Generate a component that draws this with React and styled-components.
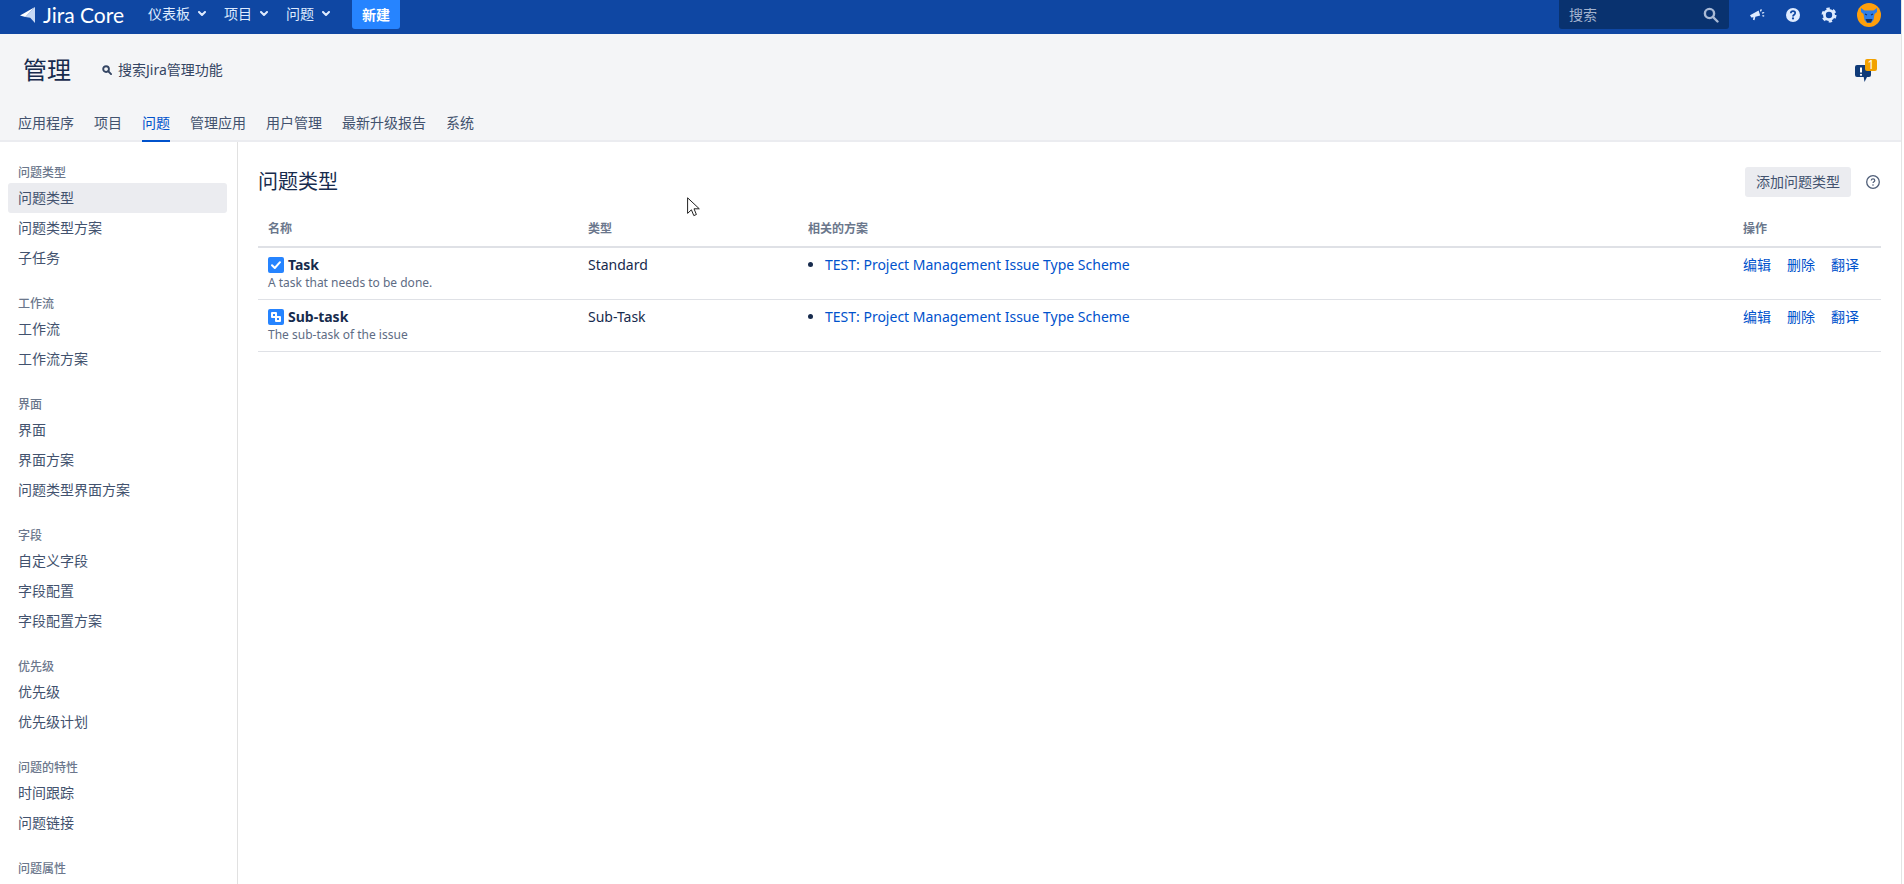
import React from 'react';
import styled, { createGlobalStyle } from 'styled-components';

const FONT = '"Noto Sans", "Noto Sans CJK SC", sans-serif';

const GlobalStyle = createGlobalStyle`
  html, body {
    margin: 0;
    height: 100%;
    overflow: hidden;
    background: #fff;
  }
  body {
    font-family: ${FONT};
    font-size: 14px;
    line-height: 20px;
    color: #172b4d;
  }
`;

const Page = styled.div`
  position: relative;
  width: 1901px;
  height: 884px;
  overflow: hidden;
  border-right: 1px solid #e4e4e4;
`;

const TopBar = styled.header`
  display: flex;
  align-items: flex-start;
  height: 34px;
  padding: 0 20px;
  background: #0f47a3;
  color: #deebff;
`;

const Logo = styled.a`
  display: flex;
  align-items: center;
  gap: 8px;
  height: 30px;
  color: #fff;
  font-family: "Lato", sans-serif;
  font-size: 21px;
  font-weight: 400;
  width: 107px;
  white-space: nowrap;
`;

const Nav = styled.nav`
  display: flex;
  align-items: center;
  gap: 18px;
  height: 28px;
  margin-left: 21px;
`;

const NavItem = styled.a`
  display: flex;
  align-items: center;
  gap: 8px;
  color: #deebff;
`;

const CreateButton = styled.button`
  width: 48px;
  height: 29px;
  margin-left: 22px;
  padding: 0;
  border: 0;
  border-radius: 0 0 3px 3px;
  background: #2684ff;
  color: #fff;
  font: 700 14px/20px ${FONT};
`;

const TopRight = styled.div`
  display: flex;
  align-items: center;
  gap: 20px;
  height: 29px;
  margin-left: auto;
`;

const SearchBox = styled.div`
  display: flex;
  align-items: center;
  justify-content: space-between;
  box-sizing: border-box;
  width: 170px;
  height: 29px;
  padding: 0 10px;
  border-radius: 0 0 3px 3px;
  background: #09326f;
  color: #a3b3cf;
`;

const IconSlot = styled.span`
  display: flex;
  align-items: center;
  justify-content: center;
  width: ${(p) => p.$size || 16}px;
  height: ${(p) => p.$size || 16}px;
`;

const AdminHeader = styled.div`
  background: #f4f5f7;
  border-bottom: 2px solid #ebecf0;
`;

const AdminTop = styled.div`
  display: flex;
  align-items: center;
  height: 72px;
  padding: 0 24px 0 23px;
`;

const AdminTitle = styled.h1`
  margin: 0;
  font-size: 24px;
  font-weight: 400;
  line-height: 32px;
`;

const AdminSearch = styled.a`
  display: flex;
  align-items: center;
  gap: 6px;
  margin-left: 31px;
  color: #344563;
`;

const Bubble = styled.span`
  position: relative;
  width: 22px;
  height: 23px;
  margin-left: auto;
`;

const BubbleBadge = styled.span`
  position: absolute;
  top: 0;
  right: 0;
  width: 12px;
  height: 12px;
  border-radius: 2px;
  background: #f2a100;
  color: #fff;
  font-size: 12px;
  line-height: 12px;
  text-align: center;
`;

const Tabs = styled.div`
  display: flex;
  gap: 20px;
  padding-left: 18px;
  height: 34px;
`;

const Tab = styled.a`
  box-sizing: content-box;
  height: 34px;
  line-height: 34px;
  border-bottom: 2px solid ${(p) => (p.$active ? '#0052cc' : 'transparent')};
  color: ${(p) => (p.$active ? '#0052cc' : '#42526e')};
`;

const Body = styled.div`
  display: flex;
  height: 742px;
`;

const Sidebar = styled.aside`
  flex: none;
  box-sizing: border-box;
  width: 238px;
  padding: 20px 10px 0 8px;
  border-right: 1px solid #e1e1e1;
`;

const NavGroup = styled.div`
  margin-bottom: 20px;
`;

const GroupTitle = styled.div`
  height: 21px;
  padding-left: 10px;
  font-size: 12px;
  font-weight: 500;
  line-height: 21px;
  color: #6b778c;
`;

const SideLink = styled.a`
  display: block;
  height: 30px;
  padding-left: 10px;
  border-radius: 3px;
  line-height: 30px;
  color: #42526e;
  background: ${(p) => (p.$active ? '#ebecf0' : 'transparent')};
`;

const Main = styled.main`
  flex: 1;
  padding: 25px 20px 0;
  min-width: 0;
`;

const MainHead = styled.div`
  display: flex;
  align-items: center;
  height: 30px;
`;

const PageTitle = styled.h2`
  margin: 0;
  font-size: 20px;
  font-weight: 400;
  line-height: 30px;
`;

const AddButton = styled.button`
  height: 30px;
  margin-left: auto;
  padding: 0 11px;
  border: 0;
  border-radius: 3px;
  background: #ebecf0;
  color: #42526e;
  font: 400 14px/20px ${FONT};
`;

const HelpLink = styled.a`
  display: flex;
  margin-left: 15px;
  margin-right: 1px;
`;

const Table = styled.table`
  width: 100%;
  margin-top: 15px;
  table-layout: fixed;
  border-collapse: separate;
  border-spacing: 0;
`;

const Th = styled.th`
  width: ${(p) => p.$w || 'auto'};
  height: 34px;
  box-sizing: border-box;
  padding: 7px 10px;
  border-bottom: 2px solid #dfe1e6;
  color: #6b778c;
  font-size: 12px;
  font-weight: 600;
  text-align: left;
`;

const Td = styled.td`
  padding: 7px 10px 8px;
  border-bottom: 1px solid #dfe1e6;
  vertical-align: top;
`;

const NameLine = styled.div`
  display: flex;
  align-items: center;
  gap: 4px;
  font-weight: 700;
`;

const Description = styled.div`
  color: #5e6c84;
  font-size: 12px;
  line-height: 16px;
`;

const SchemeList = styled.ul`
  margin: 0;
  padding: 0 0 0 17px;
`;

const TextLink = styled.a`
  color: #0052cc;
`;

const Operations = styled.div`
  display: flex;
  gap: 16px;
`;

const Cursor = styled.svg`
  position: absolute;
  left: 687px;
  top: 197px;
`;

const sideGroups = [
  { title: '问题类型', links: ['问题类型', '问题类型方案', '子任务'], active: 0 },
  { title: '工作流', links: ['工作流', '工作流方案'] },
  { title: '界面', links: ['界面', '界面方案', '问题类型界面方案'] },
  { title: '字段', links: ['自定义字段', '字段配置', '字段配置方案'] },
  { title: '优先级', links: ['优先级', '优先级计划'] },
  { title: '问题的特性', links: ['时间跟踪', '问题链接'] },
  { title: '问题属性', links: [] }
];

const tabs = ['应用程序', '项目', '问题', '管理应用', '用户管理', '最新升级报告', '系统'];

const issueTypes = [
  { name: 'Task', description: 'A task that needs to be done.', type: 'Standard', icon: 'task' },
  { name: 'Sub-task', description: 'The sub-task of the issue', type: 'Sub-Task', icon: 'subtask' }
];

const Chevron = () => (
  <svg width="8" height="6" viewBox="0 0 8 6">
    <path d="M1 1l3 3 3-3" fill="none" stroke="#deebff" strokeWidth="2" strokeLinecap="round" strokeLinejoin="round" />
  </svg>
);

const SearchIcon = ({ size, color, width }) => (
  <svg width={size} height={size} viewBox="0 0 16 16">
    <circle cx="6.5" cy="6.5" r="4.6" fill="none" stroke={color} strokeWidth={width} />
    <path d="M10 10l4.5 4.5" stroke={color} strokeWidth={width} strokeLinecap="round" />
  </svg>
);

const LogoMark = () => (
  <svg width="15" height="16" viewBox="0 0 15 16">
    <path d="M15 0L0 8.6l5.4 1.4z" fill="#fff" />
    <path d="M15 0v16l-4.8-5.2-4.8-.8z" fill="#c7d9f5" />
  </svg>
);

const TypeIcon = ({ kind }) => (
  <svg width="16" height="16" viewBox="0 0 16 16">
    <rect width="16" height="16" rx="2" fill="#2684ff" />
    {kind === 'task' ? (
      <path d="M4 8.2l2.8 2.8L12 5.2" fill="none" stroke="#fff" strokeWidth="2" strokeLinecap="round" strokeLinejoin="round" />
    ) : (
      <>
        <rect x="3" y="3" width="6" height="6" rx="1" fill="#fff" />
        <rect x="7" y="7" width="6" height="6" rx="1" fill="#fff" />
        <rect x="5" y="5" width="2" height="2" fill="#2684ff" />
        <rect x="9" y="9" width="2" height="2" fill="#2684ff" />
      </>
    )}
  </svg>
);

export default function App() {
  return (
    <>
      <GlobalStyle />
      <Page>
        <TopBar>
          <Logo>
            <LogoMark />
            Jira Core
          </Logo>
          <Nav>
            {['仪表板', '项目', '问题'].map((label) => (
              <NavItem key={label}>
                {label}
                <Chevron />
              </NavItem>
            ))}
          </Nav>
          <CreateButton>新建</CreateButton>
          <TopRight>
            <SearchBox>
              搜索
              <SearchIcon size={16} color="#a9bad6" width={2.4} />
            </SearchBox>
            <IconSlot>
              <svg width="16" height="16" viewBox="0 0 16 16">
                <path d="M1 8.2L9.6 3.4l1.6 5.2-4.8 1.2-.9 3.4-1.6-.4.6-2.6-2.2.3z" fill="#deebff" />
                <path d="M12.4 2.4l-1 2M13 6.2l2.2-.7M13.4 8.6l1.8.5" stroke="#deebff" strokeWidth="1.3" />
              </svg>
            </IconSlot>
            <IconSlot>
              <svg width="16" height="16" viewBox="0 0 16 16">
                <circle cx="8" cy="8" r="7" fill="#deebff" />
                <path d="M5.8 6.2c.1-1.3 1-2 2.2-2s2.2.8 2.2 1.9c0 1.700-2.200 1.600-2.200 3.300" fill="none" stroke="#0f47a3" strokeWidth="1.7" />
                <circle cx="8" cy="11.400" r="1.100" fill="#0f47a3" />
              </svg>
            </IconSlot>
            <IconSlot>
              <svg width="16" height="16" viewBox="0 0 16 16">
                <circle cx="8" cy="8" r="4.600" fill="none" stroke="#deebff" strokeWidth="2.800" />
                <circle cx="8" cy="8" r="6.400" fill="none" stroke="#deebff" strokeWidth="2.200" strokeDasharray="3.400 3.300" />
              </svg>
            </IconSlot>
            <IconSlot $size={24}>
              <svg width="24" height="24" viewBox="0 0 24 24">
                <circle cx="12" cy="12" r="12" fill="#ff9f0a" />
                <path d="M4 5l3.500 2.500h9L20 5v4l-2.500 2-1 6-2.500 3h-4l-2.500-3-1-6L4 9z" fill="#2f7ee8" />
                <path d="M8.500 16h7l-1.500 3.500h-4z" fill="#16305e" />
                <path d="M8 11l2 1M16 11l-2 1" stroke="#16305e" strokeWidth="1.200" />
              </svg>
            </IconSlot>
          </TopRight>
        </TopBar>

        <AdminHeader>
          <AdminTop>
            <AdminTitle>管理</AdminTitle>
            <AdminSearch>
              <SearchIcon size={10} color="#344563" width={3} />
              搜索Jira管理功能
            </AdminSearch>
            <Bubble>
              <svg width="16" height="17" viewBox="0 0 16 17" style={{ position: 'absolute', left: 0, bottom: 0 }}>
                <path d="M2 0h12a2 2 0 0 1 2 2v8a2 2 0 0 1-2 2h-2l-2.500 5-.8-5H2a2 2 0 0 1-2-2V2a2 2 0 0 1 2-2z" fill="#0f3a78" />
                <path d="M6 2.500v5" stroke="#fff" strokeWidth="2" />
                <circle cx="6" cy="9.800" r="1.100" fill="#fff" />
              </svg>
              <BubbleBadge>1</BubbleBadge>
            </Bubble>
          </AdminTop>
          <Tabs>
            {tabs.map((tab) => (
              <Tab key={tab} $active={tab === '问题'}>
                {tab}
              </Tab>
            ))}
          </Tabs>
        </AdminHeader>

        <Body>
          <Sidebar>
            {sideGroups.map((group) => (
              <NavGroup key={group.title}>
                <GroupTitle>{group.title}</GroupTitle>
                {group.links.map((link, index) => (
                  <SideLink key={link} $active={group.active === index}>
                    {link}
                  </SideLink>
                ))}
              </NavGroup>
            ))}
          </Sidebar>

          <Main>
            <MainHead>
              <PageTitle>问题类型</PageTitle>
              <AddButton>添加问题类型</AddButton>
              <HelpLink>
                <svg width="14" height="14" viewBox="0 0 14 14">
                  <circle cx="7" cy="7" r="6.300" fill="none" stroke="#505f79" strokeWidth="1.300" />
                  <path d="M5.200 5.500c.1-1 .8-1.600 1.800-1.600s1.800.6 1.800 1.500c0 1.300-1.800 1.300-1.800 2.700" fill="none" stroke="#505f79" strokeWidth="1.200" />
                  <circle cx="7" cy="10" r=".8" fill="#505f79" />
                </svg>
              </HelpLink>
            </MainHead>

            <Table>
              <thead>
                <tr>
                  <Th $w="320px">名称</Th>
                  <Th $w="220px">类型</Th>
                  <Th>相关的方案</Th>
                  <Th $w="148px">操作</Th>
                </tr>
              </thead>
              <tbody>
                {issueTypes.map((item) => (
                  <tr key={item.name}>
                    <Td>
                      <NameLine>
                        <TypeIcon kind={item.icon} />
                        {item.name}
                      </NameLine>
                      <Description>{item.description}</Description>
                    </Td>
                    <Td>{item.type}</Td>
                    <Td>
                      <SchemeList>
                        <li>
                          <TextLink>TEST: Project Management Issue Type Scheme</TextLink>
                        </li>
                      </SchemeList>
                    </Td>
                    <Td>
                      <Operations>
                        <TextLink>编辑</TextLink>
                        <TextLink>删除</TextLink>
                        <TextLink>翻译</TextLink>
                      </Operations>
                    </Td>
                  </tr>
                ))}
              </tbody>
            </Table>
          </Main>
        </Body>

        <Cursor width="13" height="20" viewBox="0 0 13 20">
          <path d="M.6.8v15.600l3.800-3.600 2.400 5.800 2.600-1.100-2.400-5.700h5.300z" fill="#fff" stroke="#222" strokeWidth="1" />
        </Cursor>
      </Page>
    </>
  );
}
